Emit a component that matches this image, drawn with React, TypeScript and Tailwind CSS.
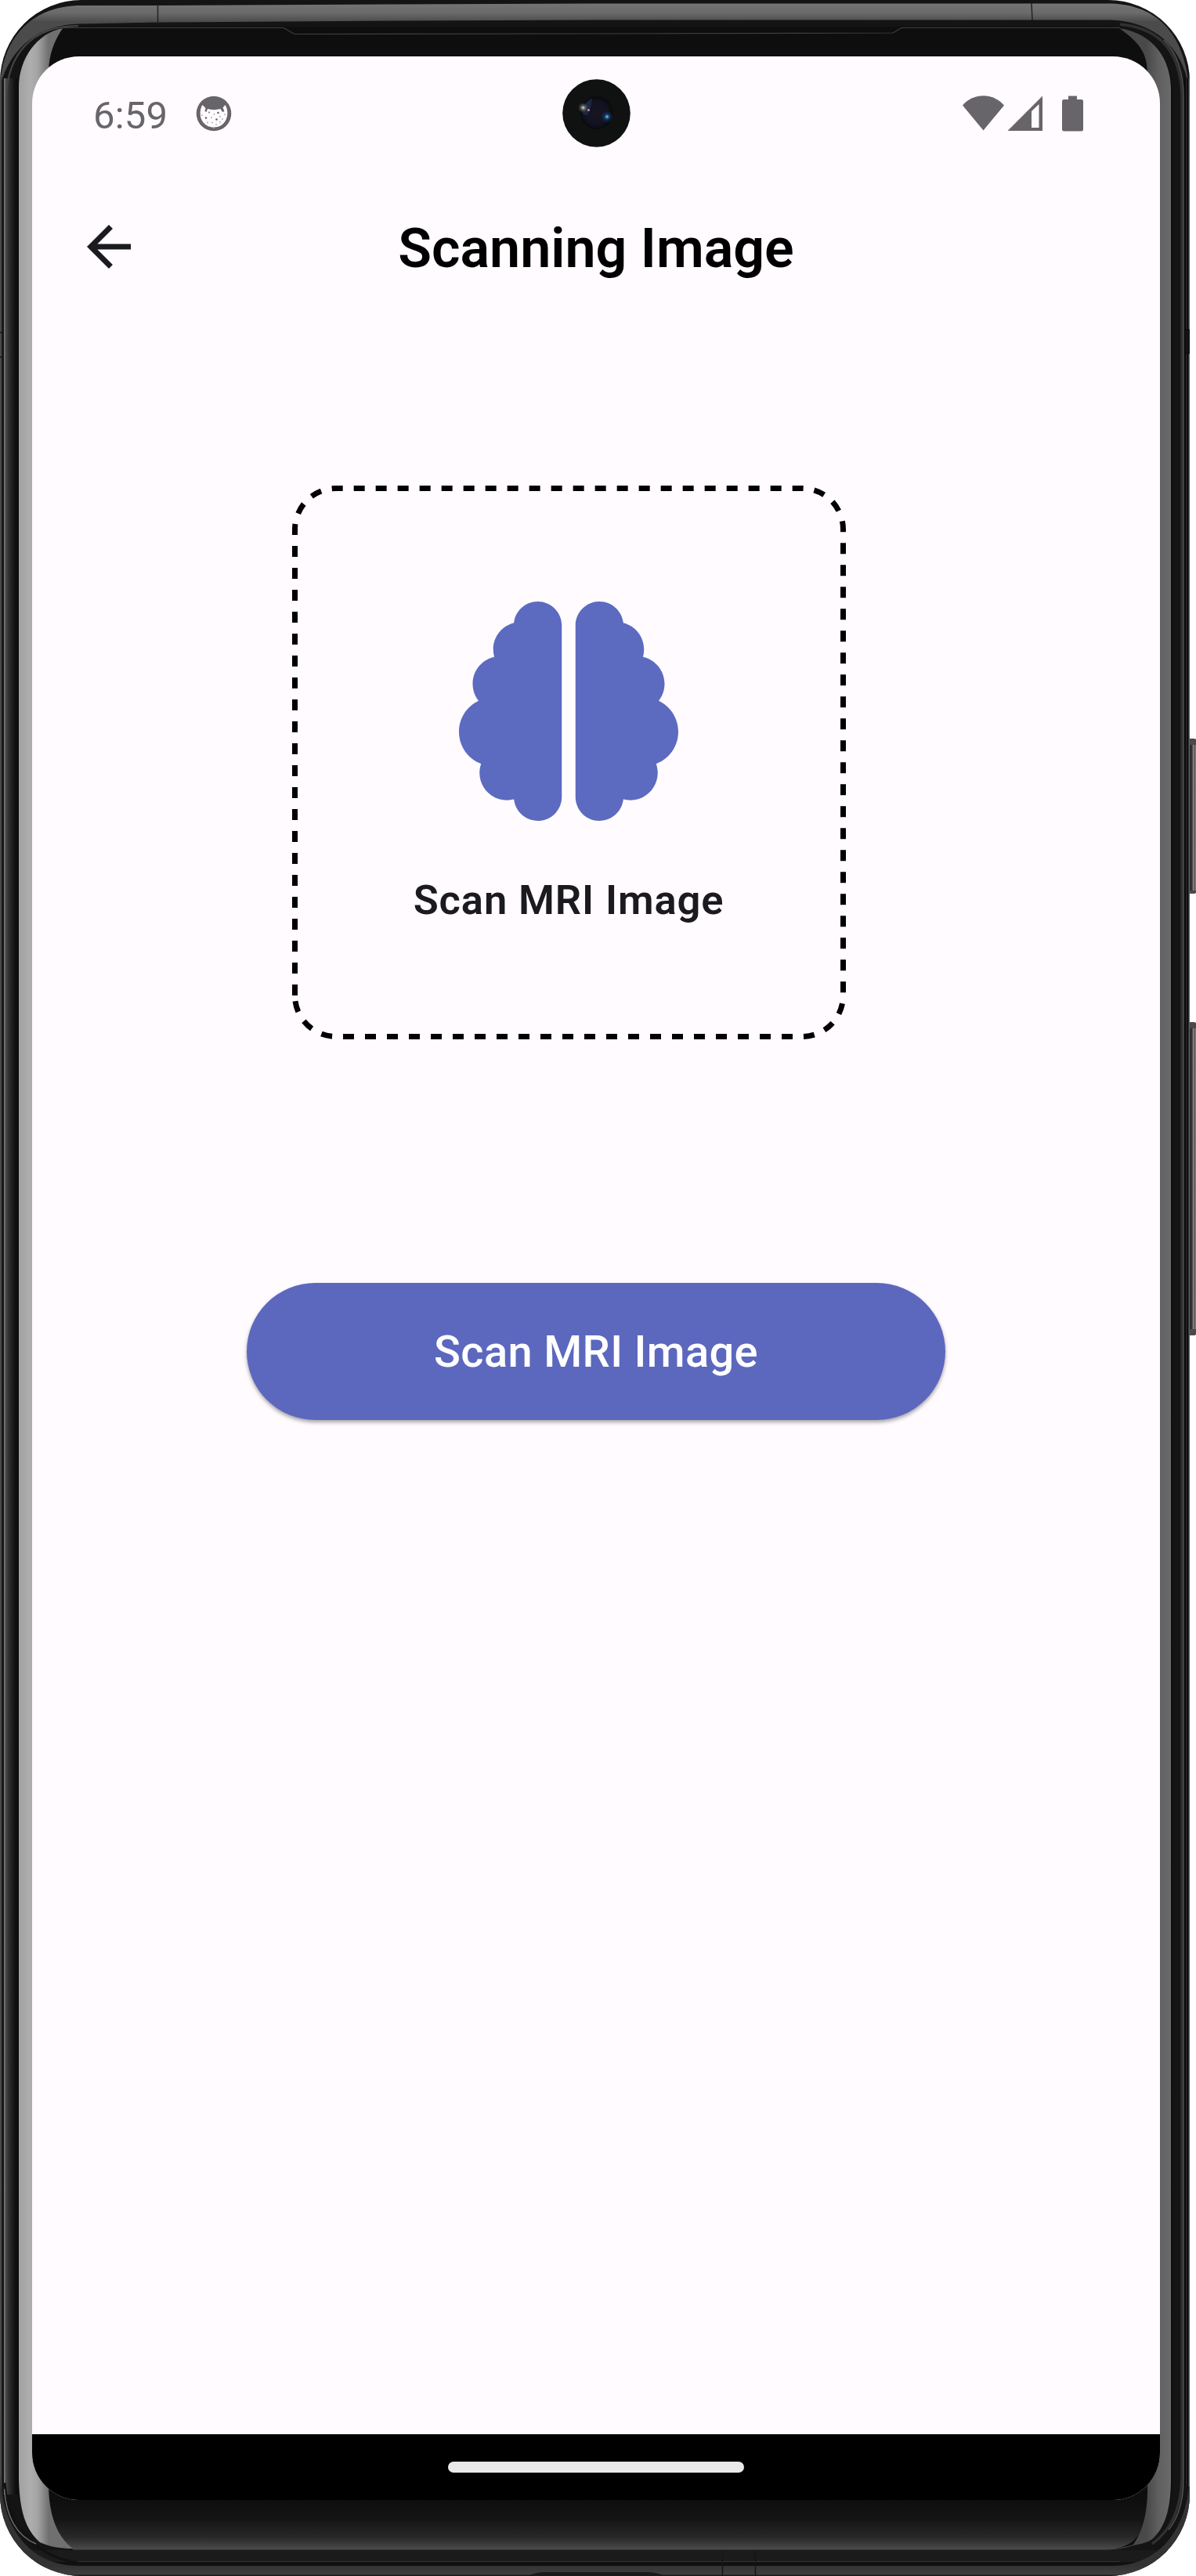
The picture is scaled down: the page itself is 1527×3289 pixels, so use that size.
import { FaBrain } from "react-icons/fa6";

function Bezel() {
  return (
    <svg className="absolute inset-0" width="1527" height="3289" viewBox="0 0 1527 3289" fill="none" aria-hidden="true">
      <defs>
        <linearGradient id="rail" x1="0" y1="5" x2="0" y2="28" gradientUnits="userSpaceOnUse">
          <stop offset="0" stopColor="#737373" />
          <stop offset="0.5" stopColor="#6a6a6a" />
          <stop offset="1" stopColor="#4b4b4b" />
        </linearGradient>
        <linearGradient id="leftEdge" x1="0" y1="0" x2="24" y2="0" gradientUnits="userSpaceOnUse">
          <stop offset="0" stopColor="#4a4a4a" />
          <stop offset="0.07" stopColor="#484848" />
          <stop offset="0.09" stopColor="#1c1c1c" />
          <stop offset="0.19" stopColor="#161616" />
          <stop offset="0.21" stopColor="#757575" />
          <stop offset="0.26" stopColor="#757575" />
          <stop offset="0.29" stopColor="#4c4c4c" />
          <stop offset="0.5" stopColor="#2c2c2c" />
          <stop offset="0.8" stopColor="#101010" />
          <stop offset="1" stopColor="#0c0c0c" />
        </linearGradient>
        <linearGradient id="leftGlare" x1="23" y1="0" x2="62" y2="0" gradientUnits="userSpaceOnUse">
          <stop offset="0" stopColor="#a0a0a0" />
          <stop offset="0.4" stopColor="#aeaeae" />
          <stop offset="0.65" stopColor="#a3a3a3" />
          <stop offset="1" stopColor="#707070" />
        </linearGradient>
        <linearGradient id="rightGlare" x1="1464" y1="0" x2="1495" y2="0" gradientUnits="userSpaceOnUse">
          <stop offset="0" stopColor="#494949" />
          <stop offset="0.5" stopColor="#606060" />
          <stop offset="1" stopColor="#6a6a6a" />
        </linearGradient>
        <linearGradient id="chin" x1="0" y1="3192" x2="0" y2="3256" gradientUnits="userSpaceOnUse">
          <stop offset="0" stopColor="#0e0e0e" />
          <stop offset="0.4" stopColor="#151515" />
          <stop offset="0.75" stopColor="#292929" />
          <stop offset="1" stopColor="#4c4c4c" />
        </linearGradient>
        <linearGradient id="lowerRail" x1="0" y1="3276" x2="0" y2="3289" gradientUnits="userSpaceOnUse">
          <stop offset="0" stopColor="#333333" />
          <stop offset="0.85" stopColor="#3f3f3f" />
          <stop offset="0.92" stopColor="#1c191b" />
          <stop offset="1" stopColor="#1c191b" />
        </linearGradient>
        <linearGradient id="sideKey" x1="1518" y1="0" x2="1527" y2="0" gradientUnits="userSpaceOnUse">
          <stop offset="0" stopColor="#2c2c2c" />
          <stop offset="0.45" stopColor="#333333" />
          <stop offset="0.6" stopColor="#888888" />
          <stop offset="0.8" stopColor="#555555" />
          <stop offset="1" stopColor="#8c8c8c" />
        </linearGradient>
        <clipPath id="body">
          <rect x="0" y="0" width="1519" height="3289" rx="104" />
        </clipPath>
      </defs>

      <rect x="1515" y="943" width="13" height="198" rx="4" fill="#4a4a4a" />
      <rect x="1518" y="951" width="10" height="186" fill="url(#sideKey)" />
      <rect x="1515" y="1305" width="13" height="400" rx="4" fill="#4a4a4a" />
      <rect x="1518" y="1313" width="10" height="384" fill="url(#sideKey)" />

      <g clipPath="url(#body)">
        <rect width="1527" height="3289" fill="#141414" />
        <rect x="0" y="100" width="24" height="3085" fill="url(#leftEdge)" />
        <path d="M0 424.500H4M0 456H4" stroke="#161616" strokeWidth="1.500" />

        {/* bottom rails */}
        <rect x="0" y="3256" width="1527" height="15" fill="#1b1b1b" />
        <path d="M90 3270.500H1430" stroke="#333333" />
        <rect x="0" y="3272" width="1527" height="4" fill="#101010" />
        <path d="M0 3150C0 3230 40 3276 100 3276H1420C1480 3276 1517 3230 1519 3160V3289H0Z" fill="url(#lowerRail)" />
        <path d="M6 3170C10 3230 50 3265 100 3272" stroke="#111111" strokeWidth="3" />
        <path d="M922.500 3256V3289M964.500 3256V3289" stroke="#161616" strokeWidth="1.500" />
        <path d="M672 3289C684 3285 688 3284 700 3284H824C838 3284 842 3287 852 3289Z" fill="#1b191b" />

        {/* top rail */}
        <path d="M0 110C4 44 44 7 104 7H201L500 5.500L760 4.500H1418C1478 6 1512 44 1518 110C1508 60 1476 28 1418 25.500H760L500 26.500L201 28.500L100 30.500C52 32 14 58 0 110Z" fill="url(#rail)" />
        <path d="M201.500 6V30M1317 4L1318 26" stroke="#222222" strokeWidth="1.500" />

        {/* glass */}
        <path d="M24 120C24 68 52 34 106 34H1412C1462 34 1497 68 1497 120V3168C1497 3222 1468 3255 1412 3255H106C52 3255 24 3222 24 3168Z" fill="#0e0e0e" />
        <path d="M62 3190H1466V3200C1460 3244 1440 3254 1412 3255H93C72 3240 64 3215 62 3190Z" fill="url(#chin)" />
        <path d="M93 3255H1412C1428 3255 1440 3252 1448 3249" stroke="#4f4f4f" />
        <path d="M8 120C11 74 36 33 100 33" stroke="#454545" strokeWidth="2" />
        <path d="M80 35.500H362L376 43.500L760 43L1140 42L1151 35.500H1430" stroke="#3f3f3f" strokeWidth="1.200" />

        {/* glare along both sides */}
        <path d="M80 36C48 42 24 74 24 112V3165C25 3205 32 3229 51 3246C64 3252 78 3254 93 3254C72 3238 62 3210 62 3170V90C63 70 68 54 80 36Z" fill="url(#leftGlare)" />
        <path d="M1429 36C1454 54 1464 66 1465 92V3168C1466 3205 1460 3232 1446 3250C1458 3248 1465 3246 1471 3242C1489 3226 1495 3200 1495 3165V112C1494 76 1474 43 1429 36Z" fill="url(#rightGlare)" />

        {/* right edge highlights */}
        <path d="M1430 31C1484 36 1508 70 1509 124V3165C1508 3200 1496 3230 1471 3248" stroke="#303030" strokeWidth="3.500" />
        <path d="M1486 51C1503 68 1511 92 1511 124V3165C1511 3194 1504 3215 1492 3230" stroke="#505050" strokeWidth="1.500" />
        <path d="M1513 100V3175" stroke="#0a0a0a" strokeWidth="2" />
        <path d="M1514.800 100V3175" stroke="#252525" strokeWidth="1.600" />
        <path d="M1516.500 100V3175" stroke="#080808" strokeWidth="1.500" />
        <path d="M1518.300 100V3175" stroke="#606060" strokeWidth="1.500" />
        <rect x="1513" y="421" width="6" height="30" fill="#141414" stroke="#060606" />
        <path d="M5.500 3178C8 3215 22 3238 46 3248" stroke="#6a6a6a" strokeWidth="1.500" />
      </g>
    </svg>
  );
}

function Camera() {
  return (
    <svg className="absolute left-[677px] top-[29px]" width="87" height="87" viewBox="0 0 87 87" aria-hidden="true">
      <defs>
        <radialGradient id="lens">
          <stop offset="0" stopColor="#191420" />
          <stop offset="0.7" stopColor="#121321" />
          <stop offset="1" stopColor="#0b0c10" />
        </radialGradient>
        <radialGradient id="blueGlow">
          <stop offset="0" stopColor="#b9e4ff" />
          <stop offset="0.2" stopColor="#2c74b0" />
          <stop offset="0.5" stopColor="#143a66" stopOpacity="0.6" />
          <stop offset="1" stopColor="#10305a" stopOpacity="0" />
        </radialGradient>
        <radialGradient id="whiteGlow">
          <stop offset="0" stopColor="#e6e8dc" />
          <stop offset="0.3" stopColor="#8a8f86" stopOpacity="0.8" />
          <stop offset="1" stopColor="#30352e" stopOpacity="0" />
        </radialGradient>
      </defs>
      <circle cx="43.500" cy="43.500" r="43.300" fill="#101211" />
      <circle cx="43.500" cy="43" r="20" fill="url(#lens)" stroke="#0b0c0d" strokeWidth="2" />
      <path d="M27 39C29 30 33 26 38 25L36 36L32 46L26 45Z" fill="#243d62" opacity="0.55" />
      <circle cx="57" cy="48" r="8" fill="url(#blueGlow)" />
      <circle cx="26.500" cy="36.500" r="7" fill="url(#whiteGlow)" />
      <circle cx="33.500" cy="39.500" r="1.500" fill="#c58bb0" />
    </svg>
  );
}

function DebugFace() {
  return (
    <svg width="46" height="46" viewBox="0 0 46 46" aria-hidden="true">
      <circle cx="23" cy="23" r="22.300" fill="#676569" />
      <path d="M8.500 12C5 17 4.500 27 8.500 33C12 38 17 40.500 23 40.500C30 40.500 35 37 38 32C41.500 26 41 17 37.500 12L34.500 15.500L36.500 20L34 21L31.500 17C26 18.500 20 18.500 15 17L13.500 21L11.500 20L12.500 16Z" fill="#fffbff" />
      <g fill="#676569">
        <circle cx="17" cy="21.500" r="0.900" />
        <circle cx="28.500" cy="22" r="1.300" />
        <circle cx="23.500" cy="24" r="0.700" />
        <circle cx="13" cy="28.500" r="1.300" />
        <circle cx="20" cy="28" r="0.700" />
        <circle cx="26.500" cy="30.500" r="1.300" />
        <circle cx="34" cy="30" r="0.700" />
        <circle cx="31" cy="27" r="0.700" />
        <circle cx="8" cy="25" r="0.700" />
        <circle cx="37" cy="24" r="0.700" />
        <circle cx="15" cy="34.500" r="0.700" />
        <circle cx="21" cy="34.500" r="0.700" />
        <circle cx="26" cy="37" r="0.700" />
        <circle cx="31" cy="34" r="0.700" />
        <circle cx="23" cy="41.500" r="0.600" fill="#fffbff" />
      </g>
    </svg>
  );
}

function StatusIcons() {
  return (
    <svg width="154" height="46" viewBox="0 0 154 46" fill="#676569" aria-hidden="true">
      <path d="M0 12.500C14 -3.700 39 -3.700 53 12.500L26.500 44.500Z" />
      <path fillRule="evenodd" d="M102 0.500V45H57.500ZM88 20V41H97.500V11Z" />
      <path d="M135 0.500H146V5H151.500Q154 5 154 7.500V43Q154 45.500 151.500 45.500H129.500Q127 45.500 127 43V7.500Q127 5 129.500 5H135Z" />
    </svg>
  );
}

function ScanCard() {
  return (
    <div className="relative ml-[331.5px] mt-[206.5px] flex h-[707px] w-[707px] shrink-0 flex-col items-center pt-[148px]">
      <svg className="absolute inset-0" width="707" height="707" viewBox="0 0 707 707" fill="none" aria-hidden="true">
        <path
          d="M3.500 651V56A52.500 52.500 0 0 1 56 3.500H651A52.500 52.500 0 0 1 703.500 56V651A52.500 52.500 0 0 1 651 703.500H56A52.500 52.500 0 0 1 3.500 651Z"
          stroke="#000000"
          strokeWidth="7"
          strokeDasharray="14 14"
        />
      </svg>
      <FaBrain className="size-[280px] text-[#5c6bc0]" />
      <p className="mt-[75px] whitespace-nowrap text-[52.5px] font-semibold leading-none tracking-[0.875px] text-[#1b1b1f]">Scan MRI Image</p>
    </div>
  );
}

export default function App() {
  return (
    <div className="relative h-[3289px] w-[1527px] overflow-hidden bg-white pl-[41px] pt-[72px] font-['Roboto',sans-serif]">
      <Bezel />
      <main className="relative flex h-[3120px] w-[1440px] flex-col overflow-hidden rounded-[60px] bg-[#fffbff]">
        <div className="flex h-[145px] shrink-0 items-center justify-between pl-[78px] pr-[98px]">
          <div className="flex items-center gap-[36px]">
            <span className="mt-[5px] text-[49px] leading-none tracking-[0.2px] text-[#676569]">6:59</span>
            <DebugFace />
          </div>
          <StatusIcons />
          <Camera />
        </div>

        <header className="relative flex h-[196px] shrink-0 items-center justify-center">
          <button className="absolute left-[56px] top-[56px]" aria-label="Back">
            <svg width="84" height="84" viewBox="0 0 24 24" fill="#1b1b1f">
              <path d="M20 11H7.830l5.590-5.590L12 4l-8 8 8 8 1.410-1.410L7.830 13H20v-2z" />
            </svg>
          </button>
          <h1 className="mt-[3px] whitespace-nowrap text-[70px] font-semibold leading-none text-black">Scanning Image</h1>
        </header>

        <ScanCard />

        <button className="mt-[311px] flex h-[175px] w-[892.5px] shrink-0 items-center justify-center self-center rounded-full bg-[#5c68be] pt-[2px] text-[56px] font-medium leading-none tracking-[0.35px] text-white shadow-[0_3px_5px_rgba(0,0,0,0.35)]">
          Scan MRI Image
        </button>

        <nav className="mt-auto flex h-[84px] shrink-0 items-center justify-center bg-black">
          <div className="h-[14px] w-[378px] rounded-full bg-[#eaeaea]" />
        </nav>
      </main>
    </div>
  );
}
